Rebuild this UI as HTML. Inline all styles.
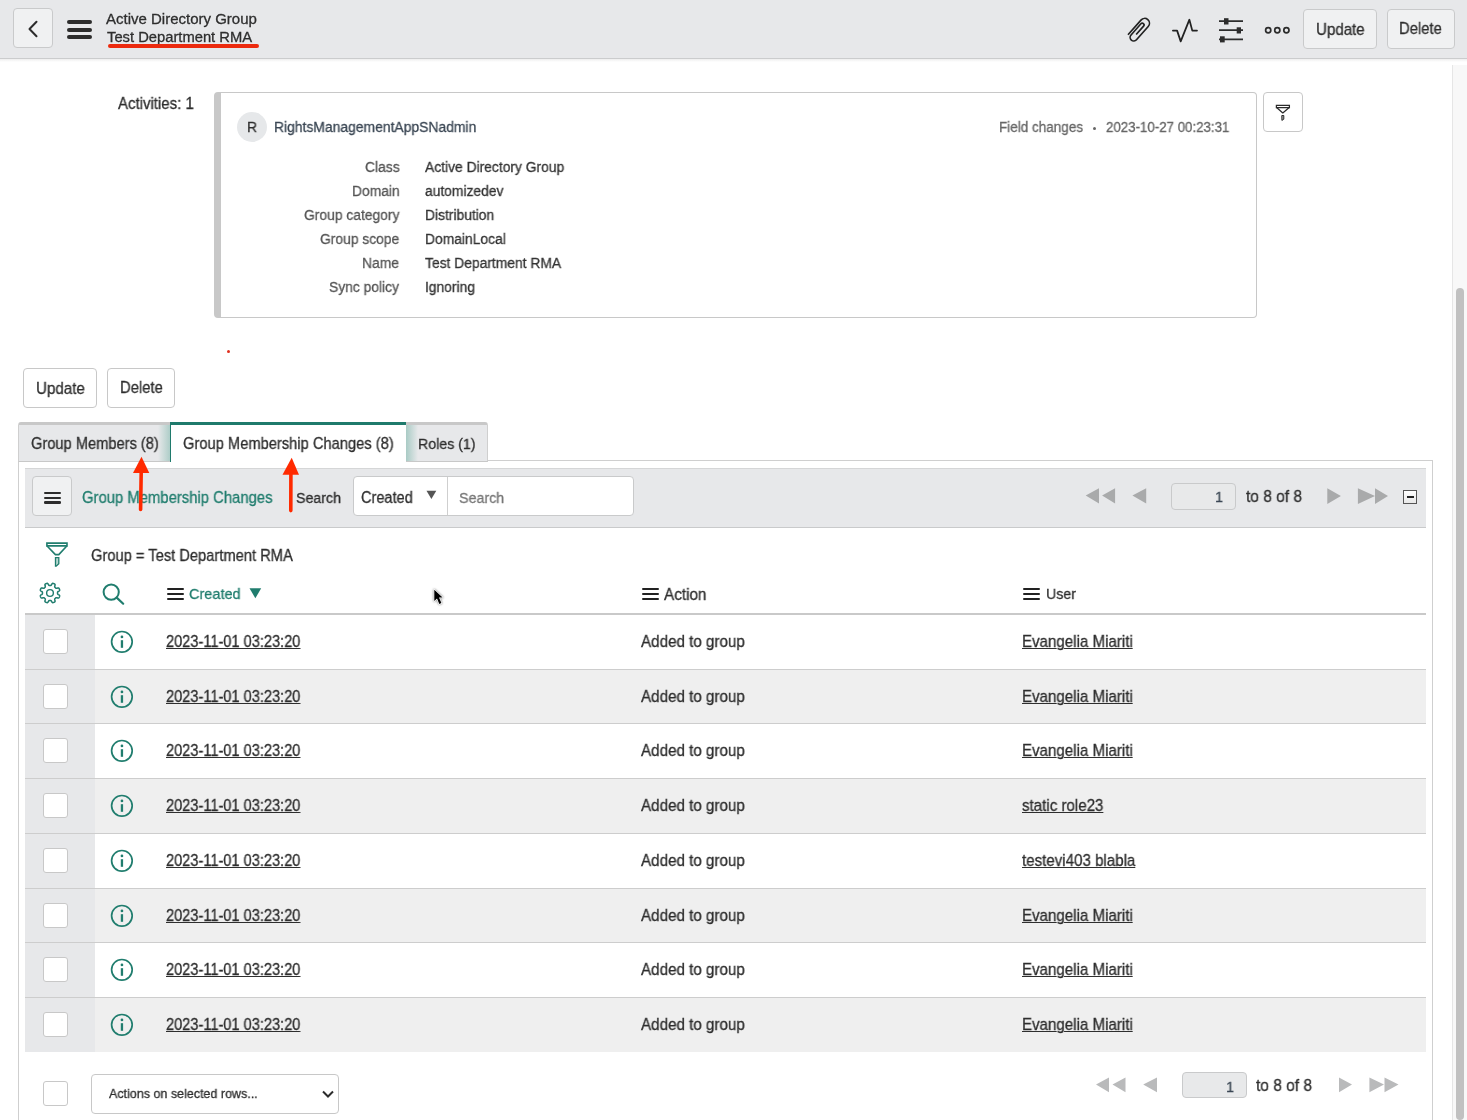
<!DOCTYPE html>
<html><head><meta charset="utf-8"><style>
html,body{margin:0;padding:0;width:1467px;height:1120px;overflow:hidden;background:#fff;}
body{position:relative;font-family:"Liberation Sans",sans-serif;}
.t{position:absolute;white-space:nowrap;will-change:transform;-webkit-text-stroke:0.3px currentColor;}
.b{position:absolute;}
</style></head><body>
<div class="b" style="left:0px;top:0px;width:1467px;height:58px;background:#e7e8ea;"></div>
<div class="b" style="left:0px;top:58px;width:1467px;height:1px;background:#cbcccd;"></div>
<div class="b" style="left:0px;top:59px;width:1467px;height:3px;background:linear-gradient(#eeeeee,#ffffff);"></div>
<div class="b" style="left:13px;top:8px;width:40px;height:40px;background:#f0f1f2;border:1px solid #c9cacb;border-radius:4px;box-sizing:border-box;"></div>
<svg class="b" style="left:27px;top:20px" width="12" height="18" viewBox="0 0 12 18"><path d="M9.5 1.8 L2.5 9 L9.5 16.2" fill="none" stroke="#2c2c2c" stroke-width="2" stroke-linecap="round" stroke-linejoin="round"/></svg>
<div class="b" style="left:67px;top:20px;width:25px;height:3.8px;background:#2c2c2c;border-radius:2px;"></div>
<div class="b" style="left:67px;top:27.8px;width:25px;height:3.8px;background:#2c2c2c;border-radius:2px;"></div>
<div class="b" style="left:67px;top:35.2px;width:25px;height:3.8px;background:#2c2c2c;border-radius:2px;"></div>
<div class="t" style="left:106.40px;top:10.72px;font-size:15.00px;line-height:16.75px;color:#2e2e2e;">Active Directory Group</div>
<div class="t" style="left:107.00px;top:29.25px;font-size:14.75px;line-height:16.48px;color:#2e2e2e;">Test Department RMA</div>
<div class="b" style="left:108px;top:44.4px;width:150.5px;height:3.8px;background:#ec2a0e;border-radius:2px;"></div>
<svg class="b" style="left:0;top:0" width="1467" height="60" viewBox="0 0 1467 60">
<path transform="matrix(0.697 0.618 -0.618 0.697 1144.6 23.3)" d="M-5.2 21 V0 A5.2 5.2 0 0 1 5.2 0 V19 A3.9 3.9 0 0 1 -2.6 19 V3 A1.9 1.9 0 0 1 1.2 3 V15" fill="none" stroke="#222" stroke-width="1.8"/>
<path d="M1172.9 30.6 H1177.1 L1180.7 41.4 L1189.4 19.7 L1192.3 30.6 H1197" fill="none" stroke="#222" stroke-width="1.75" stroke-linejoin="round" stroke-linecap="round"/>
</svg>
<svg class="b" style="left:1215px;top:12px" width="32" height="36" viewBox="0 0 32 36">
<path d="M4 9.1 H28 M4 18.2 H28 M4 27.3 H28" stroke="#2c2c2c" stroke-width="1.8"/>
<rect x="9" y="6.2" width="4.5" height="6.3" fill="#2c2c2c"/>
<rect x="21.7" y="15.3" width="4.3" height="6.2" fill="#2c2c2c"/>
<rect x="5" y="24.3" width="4.7" height="6.1" fill="#2c2c2c"/>
</svg>
<svg class="b" style="left:1262px;top:24px" width="30" height="12" viewBox="0 0 30 12">
<circle cx="6.2" cy="6.2" r="2.6" fill="none" stroke="#2c2c2c" stroke-width="1.7"/>
<circle cx="15.3" cy="6.2" r="2.6" fill="none" stroke="#2c2c2c" stroke-width="1.7"/>
<circle cx="24.4" cy="6.2" r="2.6" fill="none" stroke="#2c2c2c" stroke-width="1.7"/>
</svg>
<div class="b" style="left:1303px;top:9px;width:74px;height:40px;background:#f0f1f2;border:1px solid #c9cacb;border-radius:4px;box-sizing:border-box;"></div>
<div class="t" style="left:1315.50px;top:20.18px;font-size:16.16px;line-height:18.05px;color:#2e2e2e;transform:scaleX(0.9346);transform-origin:0 0;">Update</div>
<div class="b" style="left:1387px;top:9px;width:68px;height:40px;background:#f0f1f2;border:1px solid #c9cacb;border-radius:4px;box-sizing:border-box;"></div>
<div class="t" style="left:1399.30px;top:20.47px;font-size:15.84px;line-height:17.69px;color:#2e2e2e;transform:scaleX(0.9346);transform-origin:0 0;">Delete</div>
<div class="b" style="left:1452px;top:65px;width:15px;height:1055px;background:#f8f8f8;border-left:1px solid #e6e6e6;box-sizing:border-box;"></div>
<div class="b" style="left:1456px;top:288px;width:8px;height:832px;background:#c1c1c1;border-radius:4px;"></div>
<div class="t" style="left:118.00px;top:95.17px;font-size:16.05px;line-height:17.93px;color:#2e2e2e;transform:scaleX(0.9346);transform-origin:0 0;">Activities: 1</div>
<div class="b" style="left:214px;top:92px;width:1043px;height:226px;background:#fff;border:1px solid #c8c8c8;border-left:7px solid #c8c8c8;border-radius:4px;box-sizing:border-box;"></div>
<div class="b" style="left:237px;top:112px;width:30px;height:30px;background:#e6e8ea;border-radius:50%;"></div>
<div class="t" style="left:247.20px;top:119.14px;font-size:14.87px;line-height:16.61px;color:#2e2e2e;transform:scaleX(0.9346);transform-origin:0 0;">R</div>
<div class="t" style="left:274.40px;top:119.14px;font-size:14.87px;line-height:16.61px;color:#3b4754;transform:scaleX(0.9346);transform-origin:0 0;">RightsManagementAppSNadmin</div>
<div class="t" style="left:998.60px;top:119.33px;font-size:14.45px;line-height:16.14px;color:#666;transform:scaleX(0.9346);transform-origin:0 0;">Field changes</div>
<div class="b" style="left:1092.5px;top:126.5px;width:3px;height:3px;background:#666;border-radius:50%;"></div>
<div class="t" style="left:1105.70px;top:119.52px;font-size:14.23px;line-height:15.90px;color:#666;transform:scaleX(0.9346);transform-origin:0 0;">2023-10-27 00:23:31</div>
<div class="t" style="left:364.66px;top:159.09px;font-size:14.82px;line-height:16.55px;color:#555;transform:scaleX(0.9346);transform-origin:0 0;">Class</div>
<div class="t" style="left:425.00px;top:159.09px;font-size:14.82px;line-height:16.55px;color:#333;transform:scaleX(0.9346);transform-origin:0 0;">Active Directory Group</div>
<div class="t" style="left:351.57px;top:183.09px;font-size:14.82px;line-height:16.55px;color:#555;transform:scaleX(0.9346);transform-origin:0 0;">Domain</div>
<div class="t" style="left:425.00px;top:183.09px;font-size:14.82px;line-height:16.55px;color:#333;transform:scaleX(0.9346);transform-origin:0 0;">automizedev</div>
<div class="t" style="left:303.83px;top:207.09px;font-size:14.82px;line-height:16.55px;color:#555;transform:scaleX(0.9346);transform-origin:0 0;">Group category</div>
<div class="t" style="left:425.00px;top:207.09px;font-size:14.82px;line-height:16.55px;color:#333;transform:scaleX(0.9346);transform-origin:0 0;">Distribution</div>
<div class="t" style="left:319.99px;top:231.09px;font-size:14.82px;line-height:16.55px;color:#555;transform:scaleX(0.9346);transform-origin:0 0;">Group scope</div>
<div class="t" style="left:425.00px;top:231.09px;font-size:14.82px;line-height:16.55px;color:#333;transform:scaleX(0.9346);transform-origin:0 0;">DomainLocal</div>
<div class="t" style="left:362.35px;top:255.09px;font-size:14.82px;line-height:16.55px;color:#555;transform:scaleX(0.9346);transform-origin:0 0;">Name</div>
<div class="t" style="left:425.00px;top:255.09px;font-size:14.82px;line-height:16.55px;color:#333;transform:scaleX(0.9346);transform-origin:0 0;">Test Department RMA</div>
<div class="t" style="left:329.25px;top:279.09px;font-size:14.82px;line-height:16.55px;color:#555;transform:scaleX(0.9346);transform-origin:0 0;">Sync policy</div>
<div class="t" style="left:425.00px;top:279.09px;font-size:14.82px;line-height:16.55px;color:#333;transform:scaleX(0.9346);transform-origin:0 0;">Ignoring</div>
<div class="b" style="left:1263px;top:92px;width:40px;height:40px;background:#fff;border:1px solid #c8c8c8;border-radius:4px;box-sizing:border-box;"></div>
<svg class="b" style="left:0;top:0" width="1467" height="130" viewBox="0 0 1467 130">
<path d="M1276.4 105.4 H1289.4 V107.5 H1276.4 Z" fill="none" stroke="#2a2a2a" stroke-width="1.25"/>
<path d="M1276.6 107.6 L1282.8 112.9 L1289.2 107.6" fill="none" stroke="#2a2a2a" stroke-width="1.25" stroke-linejoin="round"/>
<path d="M1281.8 115.5 H1283.8 V119.2 L1281.9 120.4 Z" fill="#aaa" stroke="#2a2a2a" stroke-width="1.0"/>
</svg>
<div class="b" style="left:227px;top:350px;width:3px;height:3px;background:#e0301e;border-radius:50%;"></div>
<div class="b" style="left:23px;top:368px;width:74px;height:40px;background:#fff;border:1px solid #c8c8c8;border-radius:4px;box-sizing:border-box;"></div>
<div class="t" style="left:35.60px;top:379.13px;font-size:16.21px;line-height:18.11px;color:#2e2e2e;transform:scaleX(0.9346);transform-origin:0 0;">Update</div>
<div class="b" style="left:107px;top:368px;width:68px;height:40px;background:#fff;border:1px solid #c8c8c8;border-radius:4px;box-sizing:border-box;"></div>
<div class="t" style="left:119.50px;top:379.47px;font-size:15.84px;line-height:17.69px;color:#2e2e2e;transform:scaleX(0.9346);transform-origin:0 0;">Delete</div>
<div class="b" style="left:18px;top:460px;width:1415px;height:700px;background:#fff;border:1px solid #cfcfcf;box-sizing:border-box;"></div>
<div class="b" style="left:18px;top:422px;width:152px;height:40px;background:linear-gradient(90deg,#e7e8ea 0,#e7e8ea 139px,#a9cbc5 152px);border-top:3px solid #c8c8c8;border-left:1px solid #cfcfcf;border-bottom:1px solid #c8c8c8;box-sizing:border-box;border-top-left-radius:3px;"></div>
<div class="b" style="left:406px;top:422px;width:82px;height:40px;background:linear-gradient(90deg,#a9cbc5 0,#e7e8ea 12px,#e7e8ea 100%);border-top:3px solid #c8c8c8;border-right:1px solid #cfcfcf;border-bottom:1px solid #c8c8c8;box-sizing:border-box;border-top-right-radius:3px;"></div>
<div class="b" style="left:170px;top:422px;width:236px;height:40px;background:#fff;border-top:3px solid #1f7a6c;border-left:1px solid #1f7a6c;box-sizing:border-box;"></div>
<div class="t" style="left:30.60px;top:435.21px;font-size:15.68px;line-height:17.51px;color:#2e2e2e;transform:scaleX(0.9346);transform-origin:0 0;">Group Members (8)</div>
<div class="t" style="left:182.70px;top:435.17px;font-size:15.73px;line-height:17.57px;color:#2e2e2e;transform:scaleX(0.9346);transform-origin:0 0;">Group Membership Changes (8)</div>
<div class="t" style="left:418.40px;top:435.65px;font-size:15.19px;line-height:16.97px;color:#2e2e2e;transform:scaleX(0.9346);transform-origin:0 0;">Roles (1)</div>
<div class="b" style="left:25px;top:468px;width:1401px;height:60px;background:#e7e8ea;border-top:1px solid #d5d6d7;border-bottom:1px solid #c9cacb;box-sizing:border-box;"></div>
<div class="b" style="left:32px;top:476px;width:40px;height:40px;background:#f0f1f2;border:1px solid #c9cacb;border-radius:4px;box-sizing:border-box;"></div>
<div class="b" style="left:44.3px;top:491.7px;width:16.7px;height:2.6px;background:#2c2c2c;border-radius:1.3px;"></div>
<div class="b" style="left:44.3px;top:496.5px;width:16.7px;height:2.6px;background:#2c2c2c;border-radius:1.3px;"></div>
<div class="b" style="left:44.3px;top:501.3px;width:16.7px;height:2.6px;background:#2c2c2c;border-radius:1.3px;"></div>
<div class="t" style="left:82.00px;top:488.62px;font-size:15.89px;line-height:17.75px;color:#207d6e;transform:scaleX(0.9346);transform-origin:0 0;">Group Membership Changes</div>
<div class="t" style="left:295.80px;top:490.05px;font-size:15.19px;line-height:16.97px;color:#2e2e2e;transform:scaleX(0.9346);transform-origin:0 0;">Search</div>
<div class="b" style="left:353px;top:476px;width:281px;height:40px;background:#fff;border:1px solid #c9cacb;border-radius:4px;box-sizing:border-box;"></div>
<div class="b" style="left:447px;top:477px;width:1px;height:38px;background:#cfcfcf;"></div>
<div class="t" style="left:360.50px;top:488.71px;font-size:15.57px;line-height:17.39px;color:#2e2e2e;transform:scaleX(0.9346);transform-origin:0 0;">Created</div>
<svg class="b" style="left:426px;top:490px" width="11" height="10" viewBox="0 0 11 10"><path d="M0.5 0.8 H10.3 L5.4 9 Z" fill="#555"/></svg>
<div class="t" style="left:459.40px;top:489.00px;font-size:15.25px;line-height:17.03px;color:#777;transform:scaleX(0.9346);transform-origin:0 0;">Search</div>
<svg class="b" style="left:1085px;top:488px" width="64" height="16" viewBox="0 0 64 16"><path d="M0.7 7.6 L14 0.3 V15.4 Z M17.1 7.6 L30.1 0.3 V15.4 Z M47.4 7.6 L61.2 0.3 V15.4 Z" fill="#a9aaab"/></svg>
<div class="b" style="left:1171px;top:483px;width:65px;height:27px;background:#e8e9ea;border:1px solid #c9cacb;border-radius:4px;box-sizing:border-box;"></div>
<div class="t" style="left:1215.14px;top:488.26px;font-size:15.52px;line-height:17.33px;color:#3b4754;transform:scaleX(0.9346);transform-origin:0 0;">1</div>
<div class="t" style="left:1246.10px;top:487.79px;font-size:16.59px;line-height:18.53px;color:#2e2e2e;transform:scaleX(0.9346);transform-origin:0 0;">to 8 of 8</div>
<svg class="b" style="left:1327px;top:488px" width="62" height="16" viewBox="0 0 62 16"><path d="M0.3 0.2 L13.9 7.9 L0.3 15.9 Z M30.9 0.2 L48 7.9 L30.9 15.9 Z M48 0.2 L61 7.9 L48 15.9 Z" fill="#a9aaab"/></svg>
<div class="b" style="left:1403px;top:490px;width:14px;height:14px;background:linear-gradient(#fff,#e8e8e8);border:1.5px solid #555;box-sizing:border-box;"></div>
<div class="b" style="left:1406.5px;top:496.3px;width:7px;height:1.6px;background:#222;"></div>
<svg class="b" style="left:0;top:530px" width="100" height="45" viewBox="0 530 100 45">
<path d="M46.9 543.1 H67 V545.9 H46.9 Z" fill="none" stroke="#207d6e" stroke-width="1.6"/>
<path d="M47.1 546 L55.4 554.6 H58.8 L66.8 546" fill="none" stroke="#207d6e" stroke-width="1.6" stroke-linejoin="round"/>
<path d="M55.5 557.7 H58.8 V563.8 L56.2 566.2 H55.5 Z" fill="#b5d8d0" stroke="#207d6e" stroke-width="1.3"/>
</svg>
<div class="t" style="left:90.50px;top:546.77px;font-size:15.73px;line-height:17.57px;color:#2e2e2e;transform:scaleX(0.9346);transform-origin:0 0;">Group = Test Department RMA</div>
<svg class="b" style="left:36.9px;top:579.9px" width="26" height="26" viewBox="0 0 26 26">
<path d="M20.55 13.00 L20.55 13.20 L20.55 13.40 L20.55 13.59 L20.57 13.80 L20.65 14.01 L20.88 14.25 L21.36 14.55 L22.00 14.91 L22.46 15.27 L22.64 15.58 L22.67 15.86 L22.63 16.13 L22.56 16.39 L22.47 16.64 L22.38 16.88 L22.27 17.13 L22.15 17.37 L22.02 17.60 L21.86 17.81 L21.65 17.99 L21.29 18.08 L20.71 18.01 L20.01 17.82 L19.45 17.69 L19.12 17.70 L18.92 17.79 L18.76 17.92 L18.62 18.06 L18.48 18.20 L18.34 18.34 L18.20 18.48 L18.06 18.62 L17.92 18.76 L17.79 18.92 L17.70 19.12 L17.69 19.45 L17.82 20.01 L18.01 20.71 L18.08 21.29 L17.99 21.65 L17.81 21.86 L17.60 22.02 L17.37 22.15 L17.13 22.27 L16.88 22.38 L16.64 22.47 L16.39 22.56 L16.13 22.63 L15.86 22.67 L15.58 22.64 L15.27 22.46 L14.91 22.00 L14.55 21.36 L14.25 20.88 L14.01 20.65 L13.80 20.57 L13.59 20.55 L13.40 20.55 L13.20 20.55 L13.00 20.55 L12.80 20.55 L12.60 20.55 L12.41 20.55 L12.20 20.57 L11.99 20.65 L11.75 20.88 L11.45 21.36 L11.09 22.00 L10.73 22.46 L10.42 22.64 L10.14 22.67 L9.87 22.63 L9.61 22.56 L9.36 22.47 L9.12 22.38 L8.87 22.27 L8.63 22.15 L8.40 22.02 L8.19 21.86 L8.01 21.65 L7.92 21.29 L7.99 20.71 L8.18 20.01 L8.31 19.45 L8.30 19.12 L8.21 18.92 L8.08 18.76 L7.94 18.62 L7.80 18.48 L7.66 18.34 L7.52 18.20 L7.38 18.06 L7.24 17.92 L7.08 17.79 L6.88 17.70 L6.55 17.69 L5.99 17.82 L5.29 18.01 L4.71 18.08 L4.35 17.99 L4.14 17.81 L3.98 17.60 L3.85 17.37 L3.73 17.13 L3.62 16.88 L3.53 16.64 L3.44 16.39 L3.37 16.13 L3.33 15.86 L3.36 15.58 L3.54 15.27 L4.00 14.91 L4.64 14.55 L5.12 14.25 L5.35 14.01 L5.43 13.80 L5.45 13.59 L5.45 13.40 L5.45 13.20 L5.45 13.00 L5.45 12.80 L5.45 12.60 L5.45 12.41 L5.43 12.20 L5.35 11.99 L5.12 11.75 L4.64 11.45 L4.00 11.09 L3.54 10.73 L3.36 10.42 L3.33 10.14 L3.37 9.87 L3.44 9.61 L3.53 9.36 L3.62 9.12 L3.73 8.87 L3.85 8.63 L3.98 8.40 L4.14 8.19 L4.35 8.01 L4.71 7.92 L5.29 7.99 L5.99 8.18 L6.55 8.31 L6.88 8.30 L7.08 8.21 L7.24 8.08 L7.38 7.94 L7.52 7.80 L7.66 7.66 L7.80 7.52 L7.94 7.38 L8.08 7.24 L8.21 7.08 L8.30 6.88 L8.31 6.55 L8.18 5.99 L7.99 5.29 L7.92 4.71 L8.01 4.35 L8.19 4.14 L8.40 3.98 L8.63 3.85 L8.87 3.73 L9.12 3.62 L9.36 3.53 L9.61 3.44 L9.87 3.37 L10.14 3.33 L10.42 3.36 L10.73 3.54 L11.09 4.00 L11.45 4.64 L11.75 5.12 L11.99 5.35 L12.20 5.43 L12.41 5.45 L12.60 5.45 L12.80 5.45 L13.00 5.45 L13.20 5.45 L13.40 5.45 L13.59 5.45 L13.80 5.43 L14.01 5.35 L14.25 5.12 L14.55 4.64 L14.91 4.00 L15.27 3.54 L15.58 3.36 L15.86 3.33 L16.13 3.37 L16.39 3.44 L16.64 3.53 L16.88 3.62 L17.13 3.73 L17.37 3.85 L17.60 3.98 L17.81 4.14 L17.99 4.35 L18.08 4.71 L18.01 5.29 L17.82 5.99 L17.69 6.55 L17.70 6.88 L17.79 7.08 L17.92 7.24 L18.06 7.38 L18.20 7.52 L18.34 7.66 L18.48 7.80 L18.62 7.94 L18.76 8.08 L18.92 8.21 L19.12 8.30 L19.45 8.31 L20.01 8.18 L20.71 7.99 L21.29 7.92 L21.65 8.01 L21.86 8.19 L22.02 8.40 L22.15 8.63 L22.27 8.87 L22.38 9.12 L22.47 9.36 L22.56 9.61 L22.63 9.87 L22.67 10.14 L22.64 10.42 L22.46 10.73 L22.00 11.09 L21.36 11.45 L20.88 11.75 L20.65 11.99 L20.57 12.20 L20.55 12.41 L20.55 12.60 L20.55 12.80 L20.55 13.00 Z" fill="none" stroke="#207d6e" stroke-width="1.5" stroke-linejoin="round"/>
<circle cx="13" cy="13" r="3.35" fill="none" stroke="#207d6e" stroke-width="1.4"/>
</svg>
<svg class="b" style="left:98px;top:580px" width="30" height="28" viewBox="0 0 30 28">
<circle cx="13.2" cy="12.1" r="7.6" fill="none" stroke="#207d6e" stroke-width="2"/>
<path d="M18.7 17.6 L25.2 23.7" stroke="#207d6e" stroke-width="2.2" stroke-linecap="round"/>
</svg>
<div class="b" style="left:167.2px;top:588px;width:16.6px;height:2.3px;background:#222;border-radius:1px;"></div>
<div class="b" style="left:167.2px;top:592.8px;width:16.6px;height:2.3px;background:#222;border-radius:1px;"></div>
<div class="b" style="left:167.2px;top:597.6px;width:16.6px;height:2.3px;background:#222;border-radius:1px;"></div>
<div class="t" style="left:189.10px;top:585.46px;font-size:15.52px;line-height:17.33px;color:#207d6e;transform:scaleX(0.9346);transform-origin:0 0;">Created</div>
<svg class="b" style="left:249px;top:588px" width="13" height="12" viewBox="0 0 13 12"><path d="M0.5 0.2 H12.2 L6.35 10.3 Z" fill="#207d6e"/></svg>
<div class="b" style="left:642px;top:588.2px;width:16.6px;height:2.3px;background:#222;border-radius:1px;"></div>
<div class="b" style="left:642px;top:593.0px;width:16.6px;height:2.3px;background:#222;border-radius:1px;"></div>
<div class="b" style="left:642px;top:597.8000000000001px;width:16.6px;height:2.3px;background:#222;border-radius:1px;"></div>
<div class="t" style="left:663.50px;top:584.98px;font-size:16.37px;line-height:18.29px;color:#2e2e2e;transform:scaleX(0.9346);transform-origin:0 0;">Action</div>
<div class="b" style="left:1023.2px;top:588.2px;width:16.6px;height:2.3px;background:#222;border-radius:1px;"></div>
<div class="b" style="left:1023.2px;top:593.0px;width:16.6px;height:2.3px;background:#222;border-radius:1px;"></div>
<div class="b" style="left:1023.2px;top:597.8000000000001px;width:16.6px;height:2.3px;background:#222;border-radius:1px;"></div>
<div class="t" style="left:1045.50px;top:586.05px;font-size:15.19px;line-height:16.97px;color:#2e2e2e;transform:scaleX(0.9346);transform-origin:0 0;">User</div>
<div class="b" style="left:25px;top:613px;width:1401px;height:2px;background:#c9c9c9;"></div>
<div class="b" style="left:25px;top:615px;width:1401px;height:54px;background:#ffffff;"></div>
<div class="b" style="left:25px;top:615px;width:70px;height:54px;background:#e7e8ea;"></div>
<div class="b" style="left:43.3px;top:629.1px;width:24.4px;height:24.6px;background:#fff;border:1px solid #c8c8c8;border-radius:3px;box-sizing:border-box;"></div>
<svg class="b" style="left:108px;top:627.5px" width="28" height="28" viewBox="0 0 28 28">
<circle cx="13.9" cy="13.8" r="10.3" fill="none" stroke="#207d6e" stroke-width="1.7"/>
<rect x="12.8" y="12.2" width="2.3" height="7.6" fill="#207d6e"/>
<circle cx="13.95" cy="8.9" r="1.35" fill="#207d6e"/>
</svg>
<div class="t" style="left:166.20px;top:632.66px;font-size:15.62px;line-height:17.45px;color:#2e2e2e;transform:scaleX(0.9346);transform-origin:0 0;text-decoration:underline;text-underline-offset:1.2px;text-decoration-thickness:1px;">2023-11-01 03:23:20</div>
<div class="t" style="left:641.10px;top:632.08px;font-size:16.26px;line-height:18.17px;color:#2e2e2e;transform:scaleX(0.9346);transform-origin:0 0;">Added to group</div>
<div class="t" style="left:1022.40px;top:632.18px;font-size:16.16px;line-height:18.05px;color:#2e2e2e;transform:scaleX(0.9346);transform-origin:0 0;text-decoration:underline;text-underline-offset:1.2px;text-decoration-thickness:1px;">Evangelia Miariti</div>
<div class="b" style="left:25px;top:670px;width:1401px;height:53px;background:#efefef;"></div>
<div class="b" style="left:25px;top:670px;width:70px;height:53px;background:#e7e8ea;"></div>
<div class="b" style="left:25px;top:669px;width:1401px;height:1px;background:#cdcdcd;"></div>
<div class="b" style="left:43.3px;top:684.1px;width:24.4px;height:24.6px;background:#fff;border:1px solid #c8c8c8;border-radius:3px;box-sizing:border-box;"></div>
<svg class="b" style="left:108px;top:682.5px" width="28" height="28" viewBox="0 0 28 28">
<circle cx="13.9" cy="13.8" r="10.3" fill="none" stroke="#207d6e" stroke-width="1.7"/>
<rect x="12.8" y="12.2" width="2.3" height="7.6" fill="#207d6e"/>
<circle cx="13.95" cy="8.9" r="1.35" fill="#207d6e"/>
</svg>
<div class="t" style="left:166.20px;top:687.66px;font-size:15.62px;line-height:17.45px;color:#2e2e2e;transform:scaleX(0.9346);transform-origin:0 0;text-decoration:underline;text-underline-offset:1.2px;text-decoration-thickness:1px;">2023-11-01 03:23:20</div>
<div class="t" style="left:641.10px;top:687.08px;font-size:16.26px;line-height:18.17px;color:#2e2e2e;transform:scaleX(0.9346);transform-origin:0 0;">Added to group</div>
<div class="t" style="left:1022.40px;top:687.18px;font-size:16.16px;line-height:18.05px;color:#2e2e2e;transform:scaleX(0.9346);transform-origin:0 0;text-decoration:underline;text-underline-offset:1.2px;text-decoration-thickness:1px;">Evangelia Miariti</div>
<div class="b" style="left:25px;top:724px;width:1401px;height:54px;background:#ffffff;"></div>
<div class="b" style="left:25px;top:724px;width:70px;height:54px;background:#e7e8ea;"></div>
<div class="b" style="left:25px;top:723px;width:1401px;height:1px;background:#cdcdcd;"></div>
<div class="b" style="left:43.3px;top:738.1px;width:24.4px;height:24.6px;background:#fff;border:1px solid #c8c8c8;border-radius:3px;box-sizing:border-box;"></div>
<svg class="b" style="left:108px;top:736.5px" width="28" height="28" viewBox="0 0 28 28">
<circle cx="13.9" cy="13.8" r="10.3" fill="none" stroke="#207d6e" stroke-width="1.7"/>
<rect x="12.8" y="12.2" width="2.3" height="7.6" fill="#207d6e"/>
<circle cx="13.95" cy="8.9" r="1.35" fill="#207d6e"/>
</svg>
<div class="t" style="left:166.20px;top:741.66px;font-size:15.62px;line-height:17.45px;color:#2e2e2e;transform:scaleX(0.9346);transform-origin:0 0;text-decoration:underline;text-underline-offset:1.2px;text-decoration-thickness:1px;">2023-11-01 03:23:20</div>
<div class="t" style="left:641.10px;top:741.08px;font-size:16.26px;line-height:18.17px;color:#2e2e2e;transform:scaleX(0.9346);transform-origin:0 0;">Added to group</div>
<div class="t" style="left:1022.40px;top:741.18px;font-size:16.16px;line-height:18.05px;color:#2e2e2e;transform:scaleX(0.9346);transform-origin:0 0;text-decoration:underline;text-underline-offset:1.2px;text-decoration-thickness:1px;">Evangelia Miariti</div>
<div class="b" style="left:25px;top:779px;width:1401px;height:54px;background:#efefef;"></div>
<div class="b" style="left:25px;top:779px;width:70px;height:54px;background:#e7e8ea;"></div>
<div class="b" style="left:25px;top:778px;width:1401px;height:1px;background:#cdcdcd;"></div>
<div class="b" style="left:43.3px;top:793.1px;width:24.4px;height:24.6px;background:#fff;border:1px solid #c8c8c8;border-radius:3px;box-sizing:border-box;"></div>
<svg class="b" style="left:108px;top:791.5px" width="28" height="28" viewBox="0 0 28 28">
<circle cx="13.9" cy="13.8" r="10.3" fill="none" stroke="#207d6e" stroke-width="1.7"/>
<rect x="12.8" y="12.2" width="2.3" height="7.6" fill="#207d6e"/>
<circle cx="13.95" cy="8.9" r="1.35" fill="#207d6e"/>
</svg>
<div class="t" style="left:166.20px;top:796.66px;font-size:15.62px;line-height:17.45px;color:#2e2e2e;transform:scaleX(0.9346);transform-origin:0 0;text-decoration:underline;text-underline-offset:1.2px;text-decoration-thickness:1px;">2023-11-01 03:23:20</div>
<div class="t" style="left:641.10px;top:796.08px;font-size:16.26px;line-height:18.17px;color:#2e2e2e;transform:scaleX(0.9346);transform-origin:0 0;">Added to group</div>
<div class="t" style="left:1022.40px;top:796.18px;font-size:16.16px;line-height:18.05px;color:#2e2e2e;transform:scaleX(0.9346);transform-origin:0 0;text-decoration:underline;text-underline-offset:1.2px;text-decoration-thickness:1px;">static role23</div>
<div class="b" style="left:25px;top:834px;width:1401px;height:54px;background:#ffffff;"></div>
<div class="b" style="left:25px;top:834px;width:70px;height:54px;background:#e7e8ea;"></div>
<div class="b" style="left:25px;top:833px;width:1401px;height:1px;background:#cdcdcd;"></div>
<div class="b" style="left:43.3px;top:848.1px;width:24.4px;height:24.6px;background:#fff;border:1px solid #c8c8c8;border-radius:3px;box-sizing:border-box;"></div>
<svg class="b" style="left:108px;top:846.5px" width="28" height="28" viewBox="0 0 28 28">
<circle cx="13.9" cy="13.8" r="10.3" fill="none" stroke="#207d6e" stroke-width="1.7"/>
<rect x="12.8" y="12.2" width="2.3" height="7.6" fill="#207d6e"/>
<circle cx="13.95" cy="8.9" r="1.35" fill="#207d6e"/>
</svg>
<div class="t" style="left:166.20px;top:851.66px;font-size:15.62px;line-height:17.45px;color:#2e2e2e;transform:scaleX(0.9346);transform-origin:0 0;text-decoration:underline;text-underline-offset:1.2px;text-decoration-thickness:1px;">2023-11-01 03:23:20</div>
<div class="t" style="left:641.10px;top:851.08px;font-size:16.26px;line-height:18.17px;color:#2e2e2e;transform:scaleX(0.9346);transform-origin:0 0;">Added to group</div>
<div class="t" style="left:1022.40px;top:851.18px;font-size:16.16px;line-height:18.05px;color:#2e2e2e;transform:scaleX(0.9346);transform-origin:0 0;text-decoration:underline;text-underline-offset:1.2px;text-decoration-thickness:1px;">testevi403 blabla</div>
<div class="b" style="left:25px;top:889px;width:1401px;height:53px;background:#efefef;"></div>
<div class="b" style="left:25px;top:889px;width:70px;height:53px;background:#e7e8ea;"></div>
<div class="b" style="left:25px;top:888px;width:1401px;height:1px;background:#cdcdcd;"></div>
<div class="b" style="left:43.3px;top:903.1px;width:24.4px;height:24.6px;background:#fff;border:1px solid #c8c8c8;border-radius:3px;box-sizing:border-box;"></div>
<svg class="b" style="left:108px;top:901.5px" width="28" height="28" viewBox="0 0 28 28">
<circle cx="13.9" cy="13.8" r="10.3" fill="none" stroke="#207d6e" stroke-width="1.7"/>
<rect x="12.8" y="12.2" width="2.3" height="7.6" fill="#207d6e"/>
<circle cx="13.95" cy="8.9" r="1.35" fill="#207d6e"/>
</svg>
<div class="t" style="left:166.20px;top:906.66px;font-size:15.62px;line-height:17.45px;color:#2e2e2e;transform:scaleX(0.9346);transform-origin:0 0;text-decoration:underline;text-underline-offset:1.2px;text-decoration-thickness:1px;">2023-11-01 03:23:20</div>
<div class="t" style="left:641.10px;top:906.08px;font-size:16.26px;line-height:18.17px;color:#2e2e2e;transform:scaleX(0.9346);transform-origin:0 0;">Added to group</div>
<div class="t" style="left:1022.40px;top:906.18px;font-size:16.16px;line-height:18.05px;color:#2e2e2e;transform:scaleX(0.9346);transform-origin:0 0;text-decoration:underline;text-underline-offset:1.2px;text-decoration-thickness:1px;">Evangelia Miariti</div>
<div class="b" style="left:25px;top:943px;width:1401px;height:54px;background:#ffffff;"></div>
<div class="b" style="left:25px;top:943px;width:70px;height:54px;background:#e7e8ea;"></div>
<div class="b" style="left:25px;top:942px;width:1401px;height:1px;background:#cdcdcd;"></div>
<div class="b" style="left:43.3px;top:957.1px;width:24.4px;height:24.6px;background:#fff;border:1px solid #c8c8c8;border-radius:3px;box-sizing:border-box;"></div>
<svg class="b" style="left:108px;top:955.5px" width="28" height="28" viewBox="0 0 28 28">
<circle cx="13.9" cy="13.8" r="10.3" fill="none" stroke="#207d6e" stroke-width="1.7"/>
<rect x="12.8" y="12.2" width="2.3" height="7.6" fill="#207d6e"/>
<circle cx="13.95" cy="8.9" r="1.35" fill="#207d6e"/>
</svg>
<div class="t" style="left:166.20px;top:960.66px;font-size:15.62px;line-height:17.45px;color:#2e2e2e;transform:scaleX(0.9346);transform-origin:0 0;text-decoration:underline;text-underline-offset:1.2px;text-decoration-thickness:1px;">2023-11-01 03:23:20</div>
<div class="t" style="left:641.10px;top:960.08px;font-size:16.26px;line-height:18.17px;color:#2e2e2e;transform:scaleX(0.9346);transform-origin:0 0;">Added to group</div>
<div class="t" style="left:1022.40px;top:960.18px;font-size:16.16px;line-height:18.05px;color:#2e2e2e;transform:scaleX(0.9346);transform-origin:0 0;text-decoration:underline;text-underline-offset:1.2px;text-decoration-thickness:1px;">Evangelia Miariti</div>
<div class="b" style="left:25px;top:998px;width:1401px;height:54px;background:#efefef;"></div>
<div class="b" style="left:25px;top:998px;width:70px;height:54px;background:#e7e8ea;"></div>
<div class="b" style="left:25px;top:997px;width:1401px;height:1px;background:#cdcdcd;"></div>
<div class="b" style="left:43.3px;top:1012.1px;width:24.4px;height:24.6px;background:#fff;border:1px solid #c8c8c8;border-radius:3px;box-sizing:border-box;"></div>
<svg class="b" style="left:108px;top:1010.5px" width="28" height="28" viewBox="0 0 28 28">
<circle cx="13.9" cy="13.8" r="10.3" fill="none" stroke="#207d6e" stroke-width="1.7"/>
<rect x="12.8" y="12.2" width="2.3" height="7.6" fill="#207d6e"/>
<circle cx="13.95" cy="8.9" r="1.35" fill="#207d6e"/>
</svg>
<div class="t" style="left:166.20px;top:1015.66px;font-size:15.62px;line-height:17.45px;color:#2e2e2e;transform:scaleX(0.9346);transform-origin:0 0;text-decoration:underline;text-underline-offset:1.2px;text-decoration-thickness:1px;">2023-11-01 03:23:20</div>
<div class="t" style="left:641.10px;top:1015.08px;font-size:16.26px;line-height:18.17px;color:#2e2e2e;transform:scaleX(0.9346);transform-origin:0 0;">Added to group</div>
<div class="t" style="left:1022.40px;top:1015.18px;font-size:16.16px;line-height:18.05px;color:#2e2e2e;transform:scaleX(0.9346);transform-origin:0 0;text-decoration:underline;text-underline-offset:1.2px;text-decoration-thickness:1px;">Evangelia Miariti</div>
<div class="b" style="left:43.2px;top:1081px;width:24.5px;height:24.5px;background:#fff;border:1px solid #c8c8c8;border-radius:3px;box-sizing:border-box;"></div>
<div class="b" style="left:91px;top:1074px;width:248px;height:39.5px;background:#fff;border:1px solid #c8c8c8;border-radius:4px;box-sizing:border-box;"></div>
<div class="t" style="left:108.90px;top:1087.20px;font-size:13.38px;line-height:14.94px;color:#2e2e2e;transform:scaleX(0.9346);transform-origin:0 0;">Actions on selected rows...</div>
<svg class="b" style="left:321px;top:1089px" width="14" height="11" viewBox="0 0 14 11"><path d="M2 2.5 L7 7.5 L12 2.5" fill="none" stroke="#2c2c2c" stroke-width="2"/></svg>
<svg class="b" style="left:1095px;top:1077px" width="64" height="16" viewBox="0 0 64 16"><path d="M1 7.6 L14 0.5 V15.2 Z M17.5 7.6 L30.5 0.5 V15.2 Z M48.2 7.6 L62 0.5 V15.2 Z" fill="#b9babb"/></svg>
<div class="b" style="left:1182px;top:1072px;width:64.5px;height:26px;background:#e8e9ea;border:1px solid #c9cacb;border-radius:4px;box-sizing:border-box;"></div>
<div class="t" style="left:1225.94px;top:1078.26px;font-size:15.52px;line-height:17.33px;color:#3b4754;transform:scaleX(0.9346);transform-origin:0 0;">1</div>
<div class="t" style="left:1256.40px;top:1077.29px;font-size:16.59px;line-height:18.53px;color:#2e2e2e;transform:scaleX(0.9346);transform-origin:0 0;">to 8 of 8</div>
<svg class="b" style="left:1338px;top:1077px" width="62" height="16" viewBox="0 0 62 16"><path d="M1 0.5 L14 7.6 L1 15.2 Z M31.4 0.5 L46 7.6 L31.4 15.2 Z M46.5 0.5 L60.5 7.6 L46.5 15.2 Z" fill="#b9babb"/></svg>
<svg class="b" style="left:0px;top:0px;z-index:10" width="1467" height="1120" viewBox="0 0 1467 1120">
<path d="M141.5 456.7 L149.3 472.9 L133 472.9 Z" fill="#ff2a00"/>
<path d="M141.2 472 L140.6 509.5" stroke="#ff2a00" stroke-width="3.6" stroke-linecap="round"/>
<path d="M291.7 457.8 L299 474.7 L282.5 474.7 Z" fill="#ff2a00"/>
<path d="M290.9 474 L290.8 510.6" stroke="#ff2a00" stroke-width="3.6" stroke-linecap="round"/>
</svg>
<svg class="b" style="left:0;top:0;z-index:11" width="1467" height="1120" viewBox="0 0 1467 1120">
<path d="M434.3 589.8 L434.3 601 L437 598.4 L439.3 604 L441.4 603.1 L439 597.6 L442.6 597.6 Z" fill="#000" stroke="#fff" stroke-width="1.4" stroke-linejoin="round" paint-order="stroke" style="filter:drop-shadow(0.3px 0.6px 0.8px rgba(0,0,0,0.55))"/>
</svg>
</body></html>
